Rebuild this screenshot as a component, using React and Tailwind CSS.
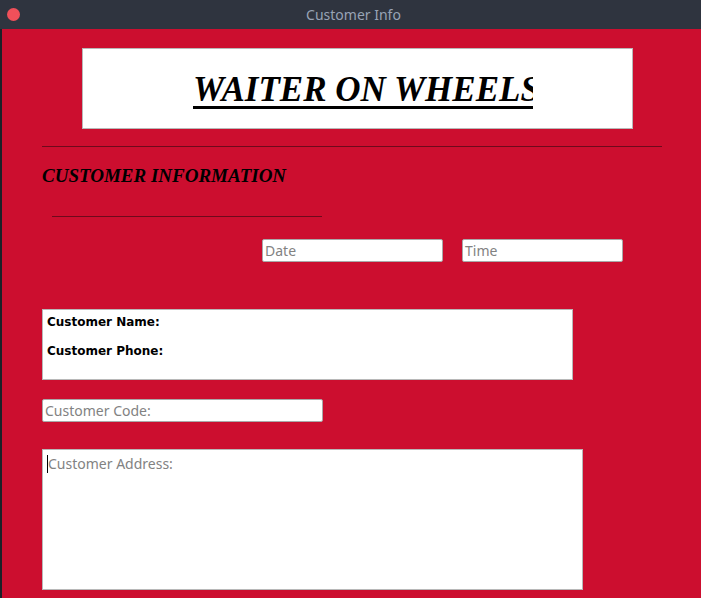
import React from "react";

export default function App() {
  const serif = { fontFamily: '"Liberation Serif", "Times New Roman", serif' };
  return (
    <div className="w-[701px] h-[598px] overflow-hidden flex flex-col bg-[#cc0e2f]">
      <div className="h-[29px] shrink-0 bg-[#2f343f] relative flex items-center justify-center">
        <div className="absolute left-[7px] top-[8px] w-[13px] h-[13px] rounded-full bg-[#f0505a]" />
        <span className="text-[14px] text-[#98a3b5] ml-[6px]" style={{ fontFamily: '"Noto Sans", sans-serif' }}>Customer Info</span>
      </div>
      <div className="flex-1 flex">
        <div className="w-[2px] bg-[#1d2128]" />
        <div className="flex-1 flex flex-col">
          <div className="pl-[80px] pt-[19px]">
            <div className="w-[551px] h-[81px] bg-white border border-[#b8b8b8] flex">
              <div className="ml-[110px] mt-[21px] w-[340px] overflow-hidden whitespace-nowrap">
                <span className="text-[35px] font-bold italic underline decoration-[3px] underline-offset-[5px] text-black leading-[40px]" style={serif}>WAITER ON WHEELS</span>
              </div>
            </div>
          </div>
          <div className="ml-[40px] mt-[17px] w-[620px] h-px bg-[#6e0a1c]" />
          <div className="ml-[40px] mt-[18px] text-[19px] font-bold italic text-black leading-[22px]" style={serif}>CUSTOMER INFORMATION</div>
          <div className="ml-[50px] mt-[29px] w-[270px] h-px bg-[#6e0a1c]" />
          <div className="flex ml-[260px] mt-[22px] gap-[19px]" style={{ fontFamily: '"Noto Sans", sans-serif' }}>
            <div className="w-[181px] h-[23px] bg-white border border-[#a9a9a9] rounded-[2px] text-[14px] text-[#828282] leading-[21px] pl-[2px]">Date</div>
            <div className="w-[161px] h-[23px] bg-white border border-[#a9a9a9] rounded-[2px] text-[14px] text-[#828282] leading-[21px] pl-[2px]">Time</div>
          </div>
          <div className="ml-[40px] mt-[47px] w-[531px] h-[71px] bg-white border border-[#b8b8b8] pl-[4px] pt-[5px] text-[12px] font-bold text-black" style={{ fontFamily: '"DejaVu Sans", sans-serif' }}>
            <div className="leading-[15px]">Customer Name:</div>
            <div className="leading-[15px] mt-[14px]">Customer Phone:</div>
          </div>
          <div className="ml-[40px] mt-[19px] w-[281px] h-[23px] bg-white border border-[#a9a9a9] rounded-[2px] text-[14px] text-[#828282] leading-[21px] pl-[2px]" style={{ fontFamily: '"Noto Sans", sans-serif' }}>Customer Code:</div>
          <div className="ml-[40px] mt-[27px] w-[541px] h-[141px] bg-white border border-[#b8b8b8] pl-[4px] pt-[4px] flex items-start" style={{ fontFamily: '"Noto Sans", sans-serif' }}>
            <div className="w-px h-[18px] bg-black mt-[1px]" />
            <span className="text-[14px] text-[#828282] leading-[20px]">Customer Address:</span>
          </div>
        </div>
      </div>
    </div>
  );
}
